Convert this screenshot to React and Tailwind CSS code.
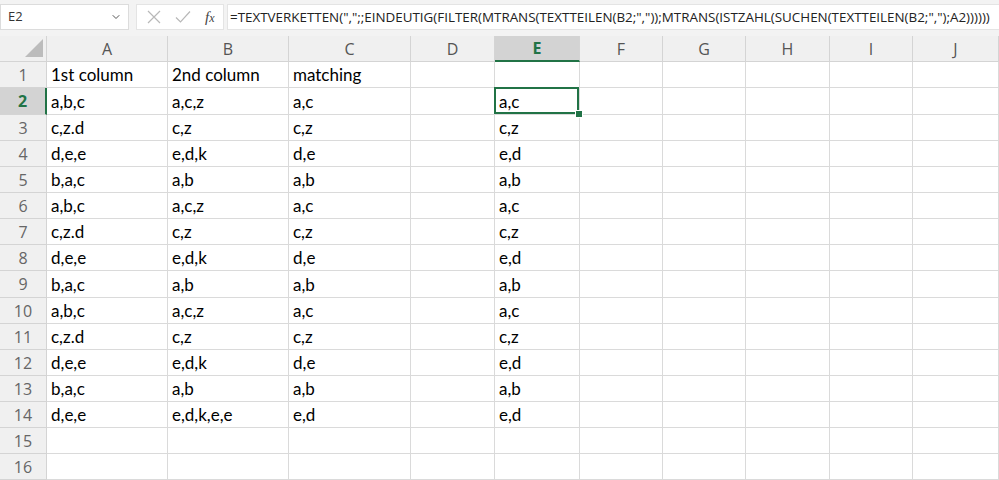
import { ChevronDown } from 'lucide-react'

const columns = [
  { key: 'A', w: 'w-[121px]' },
  { key: 'B', w: 'w-[121px]' },
  { key: 'C', w: 'w-[122px]' },
  { key: 'D', w: 'w-[84px]' },
  { key: 'E', w: 'w-[85px]' },
  { key: 'F', w: 'w-[83px]' },
  { key: 'G', w: 'w-[83px]' },
  { key: 'H', w: 'w-[84px]' },
  { key: 'I', w: 'w-[83px]' },
  { key: 'J', w: 'w-[86px]' },
]

const rowHeights = [
  'h-[26px]', 'h-[27px]', 'h-[26px]', 'h-[26px]', 'h-[26px]', 'h-[26px]', 'h-[26px]', 'h-[26px]',
  'h-[27px]', 'h-[26px]', 'h-[26px]', 'h-[26px]', 'h-[26px]', 'h-[26px]', 'h-[26px]', 'h-[26px]',
]

const block = [
  ['a,b,c', 'a,c,z', 'a,c', '', 'a,c'],
  ['c,z.d', 'c,z', 'c,z', '', 'c,z'],
  ['d,e,e', 'e,d,k', 'd,e', '', 'e,d'],
  ['b,a,c', 'a,b', 'a,b', '', 'a,b'],
]

const data = [
  ['1st column', '2nd column', 'matching', '', ''],
  ...block,
  ...block,
  ...block,
  ['d,e,e', 'e,d,k,e,e', 'e,d', '', 'e,d'],
  [],
  [],
]

const formula =
  '=TEXTVERKETTEN(",";;EINDEUTIG(FILTER(MTRANS(TEXTTEILEN(B2;","));MTRANS(ISTZAHL(SUCHEN(TEXTTEILEN(B2;",");A2))))))'

function FormulaBar() {
  return (
    <div className="flex h-[36px] items-start bg-[#f3f3f3] pt-[4px]">
      <div className="flex h-[26px] w-[129px] items-center justify-between border border-[#dcdcdc] bg-white pl-[7px] pr-[6px] text-[13px] text-[#333]">
        <span>E2</span>
        <ChevronDown size={12} strokeWidth={2} className="text-[#555]" />
      </div>
      <div className="ml-[7px] flex h-[26px] w-[88px] items-center border border-[#e4e4e4] bg-white">
        <svg width="16" height="16" viewBox="0 0 16 16" className="ml-[9px]">
          <path d="M2 2 L14 14 M14 2 L2 14" stroke="#b8b8b8" strokeWidth="1.2" fill="none" />
        </svg>
        <svg width="18" height="16" viewBox="0 0 18 16" className="ml-[12px]">
          <path d="M2 8.5 L6.5 13 L16 2.5" stroke="#b8b8b8" strokeWidth="1.2" fill="none" />
        </svg>
        <span className="ml-[13px] font-['Liberation_Serif',serif] text-[15px] italic text-[#444]">
          f<span className="text-[12px]">x</span>
        </span>
      </div>
      <div className="ml-[3px] flex h-[26px] flex-1 items-center overflow-hidden whitespace-nowrap border-y border-l border-[#e4e4e4] bg-white pl-[2px] text-[13.4px] text-[#222]">
        {formula}
      </div>
    </div>
  )
}

function HeaderRow() {
  return (
    <div className="flex h-[26px] bg-[#f0f0f0] font-['Open_Sans',sans-serif] text-[16px] text-[#555]">
      <div className="relative w-[47px] shrink-0 border-b border-r border-[#d4d4d4]">
        <div className="absolute bottom-[4px] right-[3px] h-0 w-0 border-b-[18px] border-l-[18px] border-b-[#bcbcbc] border-l-transparent" />
      </div>
      {columns.map((col) =>
        col.key === 'E' ? (
          <div
            key={col.key}
            className={`${col.w} flex shrink-0 items-center justify-center border-b-2 border-r border-b-[#217346] border-r-[#d4d4d4] bg-[#d3d3d3] font-bold text-[#217346]`}
          >
            {col.key}
          </div>
        ) : (
          <div
            key={col.key}
            className={`${col.w} flex shrink-0 items-center justify-center border-b border-r border-[#d4d4d4]`}
          >
            {col.key}
          </div>
        )
      )}
    </div>
  )
}

function Row({ index, values }) {
  const selected = index === 1
  return (
    <div className={`${rowHeights[index]} flex`}>
      {selected ? (
        <div className="flex w-[47px] shrink-0 items-center justify-center border-b border-r-2 border-b-[#d4d4d4] border-r-[#217346] bg-[#d3d3d3] font-['Open_Sans',sans-serif] text-[16px] font-bold text-[#217346]">
          {index + 1}
        </div>
      ) : (
        <div className="flex w-[47px] shrink-0 items-center justify-center border-b border-r border-[#d4d4d4] bg-[#f0f0f0] font-['Open_Sans',sans-serif] text-[16px] text-[#666]">
          {index + 1}
        </div>
      )}
      {columns.map((col, ci) => (
        <div
          key={col.key}
          className={`${col.w} relative flex shrink-0 items-end overflow-visible whitespace-nowrap border-b border-r border-[#dadada] pl-[4px] font-['Lato',sans-serif] text-[17px] leading-[24px] text-black`}
        >
          {values[ci] ?? ''}
          {selected && col.key === 'E' && (
            <>
              <div className="pointer-events-none absolute -left-[1px] -top-[1px] bottom-0 right-0 z-10 border-2 border-[#217346]" />
              <div className="absolute -bottom-[4px] -right-[4px] z-20 h-[8px] w-[8px] border border-white bg-[#217346]" />
            </>
          )}
        </div>
      ))}
    </div>
  )
}

export default function App() {
  return (
    <div className="h-[480px] w-[999px] overflow-hidden bg-white font-['Open_Sans',sans-serif]">
      <FormulaBar />
      <HeaderRow />
      {data.map((values, i) => (
        <Row key={i} index={i} values={values} />
      ))}
    </div>
  )
}
